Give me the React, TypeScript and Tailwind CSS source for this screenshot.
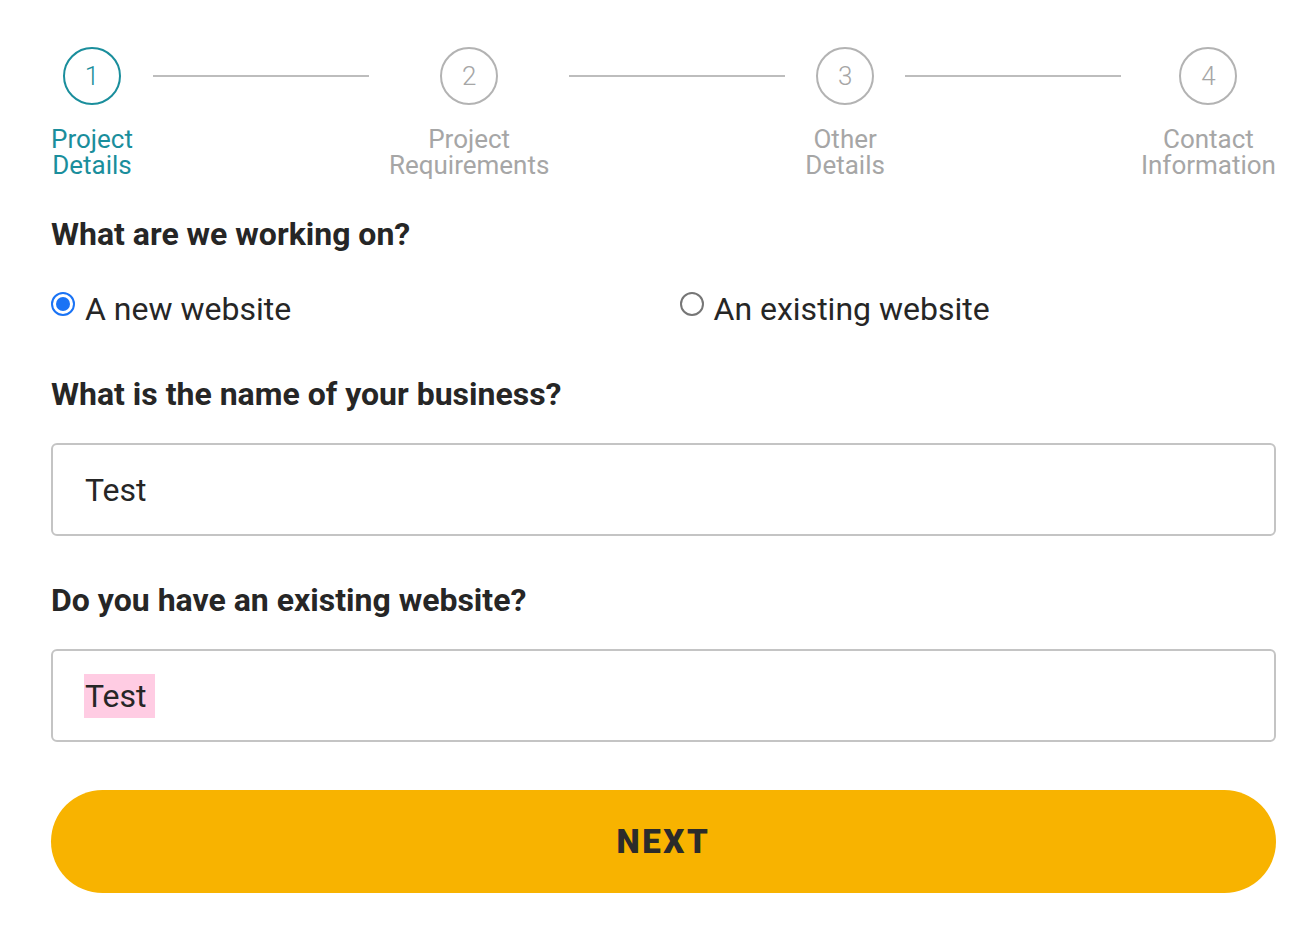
import React from "react";

const steps = [
  { n: 1, lines: ["Project", "Details"], active: true },
  { n: 2, lines: ["Project", "Requirements"], active: false },
  { n: 3, lines: ["Other", "Details"], active: false },
  { n: 4, lines: ["Contact", "Information"], active: false },
];

function Step({ n, lines, active }: { n: number; lines: string[]; active: boolean }) {
  return (
    <div className="flex flex-col items-center shrink-0">
      <div
        className={`w-[58px] h-[58px] rounded-full border-2 flex items-center justify-center text-[26px] font-light ${
          active ? "border-[#1a8e9c] text-[#1a8e9c]" : "border-[#b3b3b3] text-[#a6a6a6]"
        }`}
      >
        {n}
      </div>
      <div
        className={`mt-[21px] text-center text-[26px] leading-[26px] ${
          active ? "text-[#1a8e9c]" : "text-[#a6a6a6]"
        }`}
      >
        {lines.map((l) => (
          <div key={l}>{l}</div>
        ))}
      </div>
    </div>
  );
}

function Radio({ checked, label }: { checked: boolean; label: string }) {
  return (
    <label className="flex items-start gap-[10px]">
      {checked ? (
        <span className="mt-[2px] w-[24px] h-[24px] rounded-full border-2 border-[#1a73f5] flex items-center justify-center">
          <span className="w-[14px] h-[14px] rounded-full bg-[#1a73f5]" />
        </span>
      ) : (
        <span className="mt-[2px] w-[24px] h-[24px] rounded-full border-2 border-[#767676]" />
      )}
      <span className="text-[32px] leading-[38px] text-[#262626]">{label}</span>
    </label>
  );
}

export default function App() {
  return (
    <div className="min-h-screen bg-white font-['Roboto',sans-serif]">
      <div className="ml-[51px] w-[1225px] pt-[47px]">
        {/* Stepper */}
        <div className="flex items-start">
          {steps.map((s, i) => (
            <React.Fragment key={s.n}>
              <Step {...s} />
              {i < steps.length - 1 && (
                <div className="flex-1 mx-[20px] mt-[28px] h-[2px] bg-[#bdbdbd]" />
              )}
            </React.Fragment>
          ))}
        </div>

        <h2 className="mt-[37px] text-[32px] leading-[38px] font-bold text-[#262626]">
          What are we working on?
        </h2>

        <div className="mt-[37px] grid grid-cols-2 gap-8">
          <Radio checked label="A new website" />
          <Radio checked={false} label="An existing website" />
        </div>

        <h2 className="mt-[47px] text-[32px] leading-[38px] font-bold text-[#262626]">
          What is the name of your business?
        </h2>
        <div className="mt-[30px] h-[93px] rounded-[6px] border-2 border-[#c4c4c4] flex items-center px-[32px] text-[32px] text-[#262626]">
          Test
        </div>

        <h2 className="mt-[45px] text-[32px] leading-[38px] font-bold text-[#262626]">
          Do you have an existing website?
        </h2>
        <div className="mt-[30px] h-[93px] rounded-[6px] border-2 border-[#c4c4c4] flex items-center pl-[31px] text-[32px] text-[#262626]">
          <span className="bg-[#ffcce3] leading-[44px] pl-[1px] pr-[8px]">Test</span>
        </div>

        <button className="mt-[48px] w-full h-[103px] rounded-full bg-[#f8b300] flex items-center justify-center text-[33px] font-black tracking-[0.08em] text-[#2b2b2b]">
          NEXT
        </button>
      </div>
    </div>
  );
}
